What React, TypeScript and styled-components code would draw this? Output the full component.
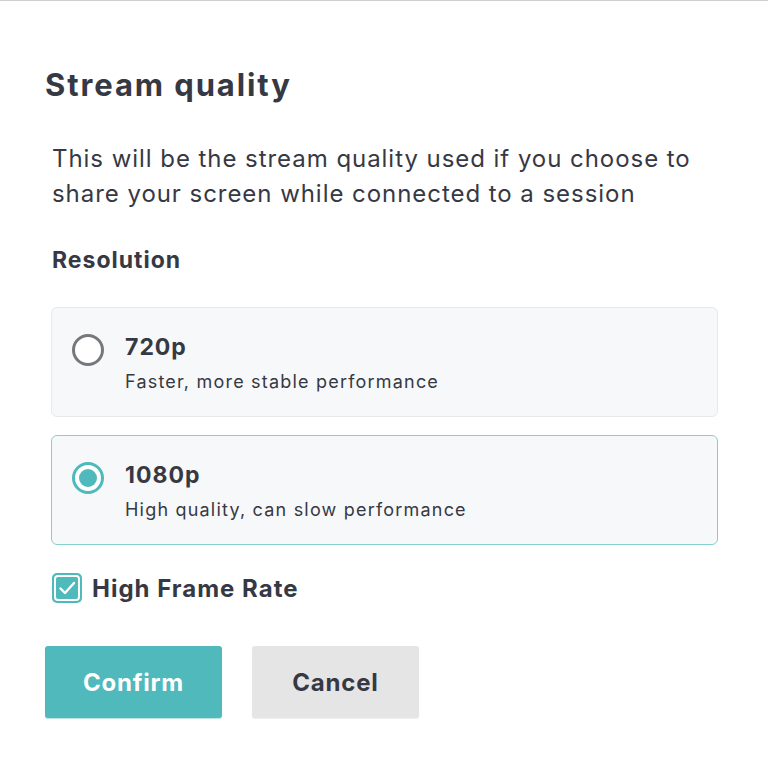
import React, { useState } from "react";
import styled, { createGlobalStyle } from "styled-components";

const GlobalStyle = createGlobalStyle`
  html, body {
    margin: 0;
    padding: 0;
    background: #ffffff;
  }
  body {
    font-family: "Inter", "Noto Sans", sans-serif;
    color: #363944;
  }
`;

const Dialog = styled.div`
  width: 768px;
  height: 783px;
  box-sizing: border-box;
  border-top: 1px solid #cfcfcf;
  padding: 64px 50px 0 45px;
  display: flex;
  flex-direction: column;
`;

const Titulo = styled.h1`
  margin: 0;
  font-size: 31px;
  font-weight: 700;
  letter-spacing: 1.9px;
  line-height: 40px;
  color: #363944;
`;

const Descricao = styled.p`
  margin: 36px 0 0 7px;
  font-size: 24px;
  font-weight: 400;
  letter-spacing: 0.95px;
  line-height: 35px;
  color: #363944;
`;

const Secao = styled.h2`
  margin: 34px 0 0 7px;
  font-size: 23px;
  font-weight: 700;
  letter-spacing: 1px;
  line-height: 30px;
  color: #363944;
`;

const Opcoes = styled.div`
  margin: 32px 0 0 6px;
  display: flex;
  flex-direction: column;
  gap: 18px;
`;

const Cartao = styled.label<{ ativo: boolean }>`
  box-sizing: border-box;
  height: 110px;
  display: flex;
  align-items: flex-start;
  gap: 21px;
  padding: 25px 20px 0 20px;
  background: #f7f8fa;
  border: 1px solid ${(p) => (p.ativo ? "#86cfcf" : "#e8e9eb")};
  border-radius: 6px;
  cursor: pointer;
`;

const Radio = styled.span<{ ativo: boolean }>`
  box-sizing: border-box;
  margin-top: 1px;
  width: 32px;
  height: 32px;
  border-radius: 50%;
  border: 3px solid ${(p) => (p.ativo ? "#4fb9bb" : "#77787c")};
  background: #ffffff;
  display: flex;
  align-items: center;
  justify-content: center;
  flex-shrink: 0;
  &::after {
    content: "";
    display: ${(p) => (p.ativo ? "block" : "none")};
    width: 18px;
    height: 18px;
    border-radius: 50%;
    background: #4fb9bb;
  }
`;

const Textos = styled.div`
  display: flex;
  flex-direction: column;
  gap: 9px;
`;

const NomeOpcao = styled.span`
  font-size: 23px;
  font-weight: 700;
  letter-spacing: 1px;
  line-height: 28px;
  color: #363944;
`;

const Detalhe = styled.span`
  font-size: 18px;
  font-weight: 400;
  letter-spacing: 1.2px;
  line-height: 24px;
  color: #363944;
`;

const LinhaCheck = styled.label`
  margin: 28px 0 0 7px;
  display: flex;
  align-items: center;
  gap: 10px;
  cursor: pointer;
`;

const Caixa = styled.span`
  width: 30px;
  height: 30px;
  box-sizing: border-box;
  border-radius: 5px;
  background: #4fb9bb;
  display: flex;
  align-items: center;
  justify-content: center;
`;

const RotuloCheck = styled.span`
  font-size: 24px;
  font-weight: 700;
  letter-spacing: 1px;
  color: #363944;
`;

const Botoes = styled.div`
  margin-top: 43px;
  display: flex;
  gap: 30px;
`;

const Botao = styled.button<{ primario?: boolean }>`
  height: 72px;
  width: ${(p) => (p.primario ? "177px" : "167px")};
  border: none;
  border-radius: 3px;
  font-family: "Inter", "Noto Sans", sans-serif;
  font-size: 24px;
  font-weight: 700;
  letter-spacing: 0.8px;
  cursor: pointer;
  background: ${(p) => (p.primario ? "#4fb9bb" : "#e5e5e5")};
  color: ${(p) => (p.primario ? "#ffffff" : "#363944")};
  box-shadow: 0 1px 1px ${(p) => (p.primario ? "#b7e1e1" : "#eeeeee")};
`;

const opcoes = [
  { id: "720p", nome: "720p", detalhe: "Faster, more stable performance" },
  { id: "1080p", nome: "1080p", detalhe: "High quality, can slow performance" },
];

export default function App() {
  const [resolucao, setResolucao] = useState("1080p");
  const [altoFps, setAltoFps] = useState(true);

  return (
    <>
      <GlobalStyle />
      <Dialog>
        <Titulo>Stream quality</Titulo>
        <Descricao>
          This will be the stream quality used if you choose to share your
          screen while connected to a session
        </Descricao>
        <Secao>Resolution</Secao>
        <Opcoes>
          {opcoes.map((o) => (
            <Cartao
              key={o.id}
              ativo={resolucao === o.id}
              onClick={() => setResolucao(o.id)}
            >
              <Radio ativo={resolucao === o.id} />
              <Textos>
                <NomeOpcao>{o.nome}</NomeOpcao>
                <Detalhe>{o.detalhe}</Detalhe>
              </Textos>
            </Cartao>
          ))}
        </Opcoes>
        <LinhaCheck onClick={() => setAltoFps(!altoFps)}>
          <Caixa>
            {altoFps && (
              <svg width="30" height="30" viewBox="0 0 30 30">
                <rect x="3" y="3" width="24" height="24" rx="3" fill="none" stroke="#ffffff" strokeWidth="2" />
                <path d="M8.5 15.5 L13 20 L22 10" fill="none" stroke="#ffffff" strokeWidth="2.4" strokeLinecap="round" strokeLinejoin="round" />
              </svg>
            )}
          </Caixa>
          <RotuloCheck>High Frame Rate</RotuloCheck>
        </LinhaCheck>
        <Botoes>
          <Botao primario>Confirm</Botao>
          <Botao>Cancel</Botao>
        </Botoes>
      </Dialog>
    </>
  );
}
